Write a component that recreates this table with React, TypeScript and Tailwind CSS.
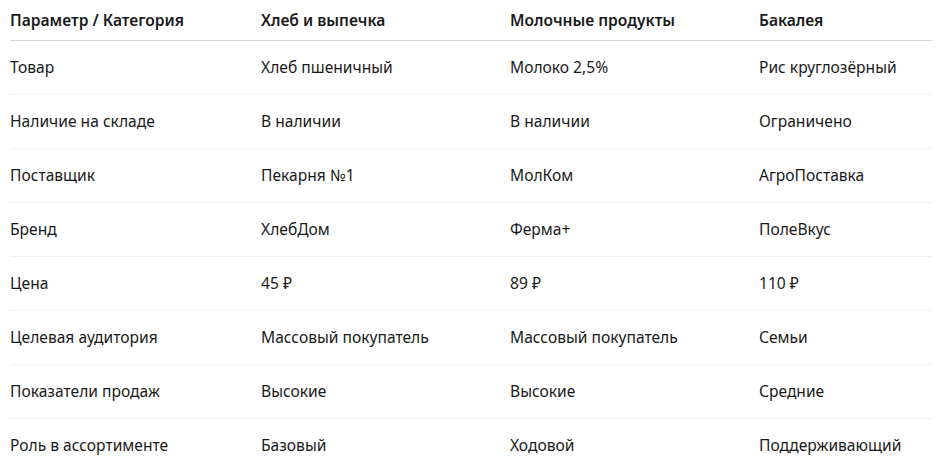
const headers = ['Параметр / Категория', 'Хлеб и выпечка', 'Молочные продукты', 'Бакалея'];

const rows: string[][] = [
  ['Товар', 'Хлеб пшеничный', 'Молоко 2,5%', 'Рис круглозёрный'],
  ['Наличие на складе', 'В наличии', 'В наличии', 'Ограничено'],
  ['Поставщик', 'Пекарня №1', 'МолКом', 'АгроПоставка'],
  ['Бренд', 'ХлебДом', 'Ферма+', 'ПолеВкус'],
  ['Цена', '45 ₽', '89 ₽', '110 ₽'],
  ['Целевая аудитория', 'Массовый покупатель', 'Массовый покупатель', 'Семьи'],
  ['Показатели продаж', 'Высокие', 'Высокие', 'Средние'],
  ['Роль в ассортименте', 'Базовый', 'Ходовой', 'Поддерживающий'],
];

const App = () => {
  return (
    <div className="bg-white min-h-screen px-[10px] text-[#1a1a1a] font-['Noto_Sans',sans-serif] text-[15.6px]">
      <table className="w-[922px] border-collapse table-fixed">
        <colgroup>
          <col className="w-[251px]" />
          <col className="w-[249px]" />
          <col className="w-[249px]" />
          <col />
        </colgroup>
        <thead>
          <tr className="border-b border-[#d4d4d4]">
            {headers.map(h => (
              <th key={h} className="h-[40px] pt-[2px] p-0 text-left font-semibold align-middle">
                {h}
              </th>
            ))}
          </tr>
        </thead>
        <tbody>
          {rows.map((row, i) => (
            <tr key={i} className="border-b border-[#f0f0f0]">
              {row.map((cell, j) => (
                <td key={j} className="h-[54px] pt-[1px] p-0 align-middle">
                  {cell}
                </td>
              ))}
            </tr>
          ))}
        </tbody>
      </table>
    </div>
  );
};

export default App;
